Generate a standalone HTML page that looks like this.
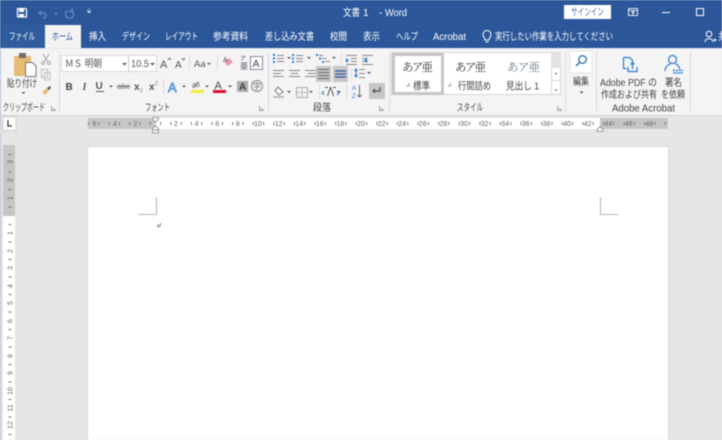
<!DOCTYPE html>
<html lang="ja"><head><meta charset="utf-8"><title>文書 1 - Word</title>
<style>
html,body{margin:0;padding:0;width:722px;height:440px;overflow:hidden;background:#e6e6e6}
svg{display:block;filter:blur(.4px)}
text{font-family:"Liberation Sans","Noto Sans CJK JP",sans-serif;font-size:10px;fill:#444}
.w text,text.w{fill:#fff}
.r text{font-size:7px;fill:#666;text-anchor:middle}
.i{fill:none;stroke:#666;stroke-width:1}
.b{fill:none;stroke:#2b7cd3;stroke-width:1.2}
.a{fill:#555}
.sep{stroke:#dcdcdc;stroke-width:1}
</style></head><body>
<svg width="722" height="440" viewBox="0 0 722 440" xmlns="http://www.w3.org/2000/svg">
<rect width="722" height="440" fill="#e6e6e6"/>
<!-- title bar -->
<rect width="722" height="48" fill="#2b579a"/>
<rect x="0" y="24" width="45" height="24" fill="#2f5c9e"/>
<rect x="45" y="25" width="36" height="24" fill="#f3f3f3"/>
<rect x="0" y="48" width="722" height="1" fill="#dfe6f1"/>
<!-- QAT -->
<path d="M17.5 8.5h8l1 1v7.5h-9z" fill="none" stroke="#fff" stroke-width="1.2"/>
<rect x="19" y="9" width="5" height="3" fill="#fff"/><rect x="19" y="14" width="5" height="3" fill="#fff"/>
<path d="M41 11l-2 2 2 2M39.5 13h5a3 3 0 0 1 0 5h-2" fill="none" stroke="#6d8dbd" stroke-width="1.2"/>
<path d="M54 13l2 2 2-2z" fill="#6d8dbd"/>
<path d="M71 10.500a4 4 0 1 1-3 0M72 8.500v3h-3" fill="none" stroke="#6d8dbd" stroke-width="1.2"/>
<path d="M87.500 9h3M87 11l2 2 2-2z" fill="#cdd8e8" stroke="#cdd8e8" stroke-width=".6"/>
<g class="w">
<text x="343" y="16" textLength="17" lengthAdjust="spacingAndGlyphs">文書</text>
<text x="363" y="16">1</text><text x="379" y="16">-</text>
<text x="385" y="16" textLength="22" lengthAdjust="spacingAndGlyphs">Word</text>
<text x="9" y="40" textLength="26" lengthAdjust="spacingAndGlyphs">ファイル</text>
<text x="89" y="40" textLength="17" lengthAdjust="spacingAndGlyphs">挿入</text>
<text x="122" y="40" textLength="28" lengthAdjust="spacingAndGlyphs">デザイン</text>
<text x="165" y="40" textLength="33" lengthAdjust="spacingAndGlyphs">レイアウト</text>
<text x="213" y="40" textLength="35" lengthAdjust="spacingAndGlyphs">参考資料</text>
<text x="265" y="40" textLength="49" lengthAdjust="spacingAndGlyphs">差し込み文書</text>
<text x="330" y="40" textLength="17" lengthAdjust="spacingAndGlyphs">校閲</text>
<text x="363" y="40" textLength="17" lengthAdjust="spacingAndGlyphs">表示</text>
<text x="396" y="40" textLength="22" lengthAdjust="spacingAndGlyphs">ヘルプ</text>
<text x="433" y="40" textLength="33" lengthAdjust="spacingAndGlyphs">Acrobat</text>
<text x="495" y="40" textLength="118" lengthAdjust="spacingAndGlyphs">実行したい作業を入力してください</text>
<text x="718" y="40">共</text>
</g>
<text x="52" y="40" style="fill:#2b579a" textLength="21" lengthAdjust="spacingAndGlyphs">ホーム</text>
<path d="M485 40c0-2-2-3-2-5.500a4 4 0 0 1 8 0c0 2.500-2 3.500-2 5.500zM485.500 42h3" fill="none" stroke="#fff"/>
<circle cx="709" cy="34" r="2.800" fill="none" stroke="#fff"/><path d="M705 42c0-4.500 8-4.500 8 0M713.500 40h3M715 38.500v3" fill="none" stroke="#fff"/>
<!-- sign in + window -->
<rect x="564" y="5" width="47" height="14" fill="#fff"/>
<text x="571" y="15.500" style="fill:#4a6ea8" textLength="33" lengthAdjust="spacingAndGlyphs">サインイン</text>
<rect x="628.500" y="8.500" width="9" height="7" fill="none" stroke="#dfe6f1"/><path d="M628 10.500h10M633 15v-3M631.500 13l1.500-1.500 1.500 1.500" fill="none" stroke="#dfe6f1"/>
<rect x="662" y="12" width="8" height="1" fill="#fff"/>
<rect x="696.500" y="8.500" width="7" height="7" fill="none" stroke="#fff"/>
<!-- ribbon -->
<rect x="0" y="49" width="722" height="66" fill="#f4f4f4"/>
<rect x="0" y="115" width="722" height="1" fill="#d2d2d2"/>
<g class="sep"><path d="M59.500 52v60M268.500 52v60M389.500 52v60M565.500 52v60M596.500 52v60M690.500 52v60"/></g>
<!-- clipboard -->
<rect x="14" y="56" width="17" height="20" rx="1" fill="#e6bc74"/>
<rect x="19" y="53" width="7" height="5" fill="#6b6b6b"/>
<path d="M25.500 62.500h7l3.500 3.500v10.500h-10.500z" fill="#fff" stroke="#777"/>
<text x="7" y="87" textLength="30" lengthAdjust="spacingAndGlyphs">貼り付け</text>
<path d="M21.500 92l2 2 2-2z" class="a"/>
<path d="M43 54l5 8M49 54l-5 8" stroke="#a9a9a9" fill="none"/><circle cx="43" cy="63" r="1.500" fill="none" stroke="#a9a9a9"/><circle cx="49" cy="63" r="1.500" fill="none" stroke="#a9a9a9"/>
<path d="M41.500 69.500h6v8h-6zM44.500 72.500h5.500v7.500h-5.500z" fill="#f4f4f4" stroke="#bdbdbd"/>
<path d="M42 92l5-4 2 3-4 4z" fill="#e6bc74"/><path d="M47 88l3-2 1 2-2 2z" fill="#555"/>
<text x="3" y="111" textLength="42" lengthAdjust="spacingAndGlyphs">クリップボード</text>
<path d="M51.500 106v4.500h4.500M53 108l2.500 2.500" fill="none" stroke="#888" stroke-width=".8"/>
<!-- font -->
<rect x="61.500" y="55.500" width="95" height="16" fill="#fff" stroke="#d8d8d8"/><path d="M128.500 55v17" stroke="#c8c8c8"/>
<text x="65" y="67" style="font-size:10px;fill:#555" textLength="37" lengthAdjust="spacingAndGlyphs">ＭＳ 明朝</text>
<path d="M122 63l2.500 2.500 2.500-2.500z" class="a"/>
<text x="131" y="67" style="font-size:10px;fill:#555" textLength="18" lengthAdjust="spacingAndGlyphs">10.5</text>
<path d="M150 63l2.500 2.500 2.500-2.500z" class="a"/>
<text x="160" y="68" style="font-size:11px;fill:#555">A</text><path d="M168 60l1.500-2 1.500 2" fill="none" stroke="#555" stroke-width=".8"/>
<text x="175" y="68" style="font-size:10px;fill:#555">A</text><path d="M182 58l1.500 2 1.500-2" fill="none" stroke="#555" stroke-width=".8"/>
<path d="M189.500 55v15M217.500 55v15M163.500 79v15" class="sep"/>
<text x="194" y="67" style="font-size:9.500px;fill:#555">Aa</text><path d="M207 63l2 2 2-2z" class="a"/>
<path d="M224 62l5-4 4 4-5 4z" fill="#e89bb0"/><text x="223" y="62" style="font-size:7px;fill:#555">A</text>
<text x="240" y="60.500" style="font-size:6px;fill:#555">ア</text><text x="240" y="69" style="font-size:8px;fill:#555">亜</text>
<rect x="250.500" y="56.500" width="12" height="13" fill="#fff" stroke="#7b8aa0"/><text x="252.500" y="67" style="font-size:10.500px;fill:#444">A</text>
<text x="65.500" y="90" style="font-size:10px;font-weight:bold;fill:#444">B</text>
<text x="82.500" y="90" style="font-size:10px;font-style:italic;font-weight:bold;font-family:'Liberation Serif',serif;fill:#555">I</text>
<text x="95.500" y="89" style="font-size:10px;font-weight:bold;fill:#555">U</text><rect x="96" y="91" width="8" height="1" fill="#555"/>
<path d="M109 85.500l2 2 2-2z" class="a"/>
<text x="117" y="89" style="font-size:8px;fill:#777" textLength="13" lengthAdjust="spacingAndGlyphs">abc</text><rect x="117" y="86" width="13" height="1" fill="#666"/>
<text x="134" y="90" style="font-size:10px;font-weight:bold;fill:#555">x</text><text x="140" y="92" style="font-size:5px;fill:#777">2</text>
<text x="149" y="90" style="font-size:10px;font-weight:bold;fill:#555">x</text><text x="155" y="85" style="font-size:5px;fill:#777">2</text>
<text x="168" y="92" style="font-size:13px;fill:#dfe9f6;stroke:#2b7cd3;stroke-width:.7">A</text>
<path d="M182 85.500l2 2 2-2zM205 85.500l2 2 2-2zM228 85.500l2 2 2-2z" class="a"/>
<text x="192" y="87" style="font-size:7px;fill:#666">ab</text><path d="M193 88l6-6" stroke="#777"/><rect x="191" y="90" width="13" height="3" fill="#f2ee3a"/>
<text x="214.500" y="89" style="font-size:11px;fill:#444">A</text><rect x="213" y="90" width="13" height="3" fill="#d8102a"/>
<rect x="237" y="81" width="11" height="11" fill="#adadad"/><text x="239" y="90" style="font-size:10px;font-weight:bold;fill:#444">A</text>
<circle cx="257" cy="86" r="5.500" fill="none" stroke="#888"/><text x="253" y="89" style="font-size:8px;fill:#666">字</text>
<text x="145" y="111" textLength="25" lengthAdjust="spacingAndGlyphs">フォント</text>
<path d="M259.500 106v4.500h4.500M261 108l2.500 2.500" fill="none" stroke="#888" stroke-width=".8"/>
<!-- paragraph -->
<rect x="316" y="66" width="15" height="16" fill="#c6c6c6"/>
<rect x="333" y="66" width="15" height="16" fill="#c6c6c6"/>
<rect x="369" y="83" width="16" height="16" fill="#c6c6c6"/>
<g fill="none" stroke="#888">
<path d="M277 55.500h7M277 58.500h7M277 61.500h7M296 55.500h7M296 58.500h7M296 61.500h7M319 55.500h4M322 58.500h5M325 61.500h5"/>
<path d="M346 55.500h11M351 58.500h6M351 61.500h6M346 64.500h11M362 55.500h11M362 58.500h6M362 61.500h6M362 64.500h11"/>
<path d="M273 70.500h11M273 73.500h8M273 76.500h11M289 70.500h11M291 73.500h7M289 76.500h11M305 70.500h11M308 73.500h8M305 76.500h11"/>
<path d="M318 69.500h11M318 72.500h11M318 75.500h11M318 78.500h11" stroke="#666"/>
<path d="M335 74h11M335 77h11M335 71h11" stroke="#2b579a" stroke-width="1.200"/>
<path d="M359 69.500h6M359 73.500h6M359 77.500h6" />
<rect x="296.500" y="87.500" width="11" height="10" stroke="#aaa"/><path d="M302 87v11M296 92.500h12" stroke="#bbb"/>
</g>
<g fill="#2b7cd3"><path d="M273 54h2v2h-2zM273 57.500h2v2h-2zM273 61h2v2h-2zM292 54h2v2h-2zM292 57.500h2v2h-2zM292 61h2v2h-2zM316 54h2v2h-2zM319 57.500h2v2h-2zM322 61h2v2h-2z"/>
<path d="M349 58l3 2.500-3 2.500zM367 60.500l3-2.500v5z" transform="translate(-3 0)"/>
<path d="M356 68l2 3h-4zM356 78l2-3h-4z"/><rect x="355.500" y="70" width="1" height="6"/></g>
<path d="M287 57l2 2 2-2zM307 57l2 2 2-2zM332 57l2 2 2-2zM367 72l2 2 2-2zM287 91l2 2 2-2zM309 91l2 2 2-2zM337 91l2 2 2-2z" class="a"/>
<path d="M319.500 84v15M341.500 53v13M351.500 68v14M346.500 84v15" class="sep"/>
<path d="M278 87l5 5-4 3-4-4z" fill="#fff" stroke="#777"/><rect x="273" y="96" width="11" height="2" fill="#bbb"/>
<path d="M325 87.500h3M333 87.500h3M330.500 87l-3 9M330.500 87l3 9" stroke="#555" fill="none"/>
<path d="M324 91l-2 2 2 2M337 91l2 2-2 2" fill="none" stroke="#2b7cd3"/>
<text x="352" y="90" style="font-size:6.500px;fill:#2b7cd3">A</text><text x="352" y="98" style="font-size:6.500px;fill:#2b7cd3">Z</text>
<path d="M359.500 85v12M357.500 95l2 2 2-2" fill="none" stroke="#666"/>
<path d="M380 87v4h-7M375 89l-2 2 2 2" fill="none" stroke="#555" stroke-width="1.200"/>
<text x="313" y="111" textLength="18" lengthAdjust="spacingAndGlyphs">段落</text>
<path d="M379.500 106v4.500h4.500M381 108l2.500 2.500" fill="none" stroke="#888" stroke-width=".8"/>
<!-- styles -->
<rect x="391.500" y="52.500" width="169" height="42" fill="#fff" stroke="#d6d6d6"/>
<rect x="393.500" y="54.500" width="49" height="39" fill="#fff" stroke="#c6c6c6" stroke-width="3"/>
<rect x="551" y="53" width="10" height="15" fill="#e3e3e3"/>
<path d="M551.500 68v26M551 80.500h10" stroke="#d6d6d6" fill="none"/>
<path d="M554.500 73l1.500 1.500 1.500-1.500zM554 88h4M554.500 89.500l1.500 1.500 1.500-1.500z" fill="#555"/>
<text x="402" y="71" style="font-size:11.500px;fill:#333;font-family:'Liberation Serif','Noto Serif CJK SC',serif" textLength="31">あア亜</text>
<text x="455" y="71" style="font-size:11.500px;fill:#333;font-family:'Liberation Serif','Noto Serif CJK SC',serif" textLength="31">あア亜</text>
<text x="507" y="71" style="font-size:11.500px;fill:#6d7a8c;font-family:'Liberation Serif','Noto Serif CJK SC',serif" textLength="33">あア亜</text>
<path d="M409 83v3h-3M450.500 83v3h-3" fill="none" stroke="#888" stroke-width=".8"/>
<text x="413" y="89.500" textLength="17" lengthAdjust="spacingAndGlyphs">標準</text>
<text x="458" y="89.500" textLength="33" lengthAdjust="spacingAndGlyphs">行間詰め</text>
<text x="506" y="89.500" textLength="33" lengthAdjust="spacingAndGlyphs">見出し 1</text>
<text x="457" y="111" textLength="26" lengthAdjust="spacingAndGlyphs">スタイル</text>
<path d="M557.500 106v4.500h4.500M559 108l2.500 2.500" fill="none" stroke="#888" stroke-width=".8"/>
<!-- edit -->
<rect x="570" y="51" width="22" height="22" fill="#fff" stroke="#e3e3e3"/>
<circle cx="582.500" cy="59.500" r="3.800" fill="none" stroke="#2b6cb0" stroke-width="1.300"/><path d="M579.500 62.500l-3.500 3.500" stroke="#2b6cb0" stroke-width="1.500"/>
<text x="573" y="85" textLength="16" lengthAdjust="spacingAndGlyphs">編集</text>
<path d="M579.500 91.500l2 2 2-2z" class="a"/>
<!-- acrobat -->
<path d="M623.500 57.500h6l3 3v5M623.500 57.500v11h3" class="b"/>
<path d="M628 67v4.500h9V67M632.500 69v-6M630.500 64.500l2-2 2 2" class="b"/>
<circle cx="672.500" cy="59.500" r="4" class="b"/><path d="M665 71c0-5 4-6.500 5.500-7.500M680 69c-1-3-3-4.500-4.500-5.500" class="b"/><path d="M673 70.500h10" stroke="#2b7cd3" stroke-width="1.500" stroke-dasharray="2 1"/>
<path d="M673 73h10" stroke="#2b7cd3"/>
<text x="600" y="86" textLength="57" lengthAdjust="spacingAndGlyphs">Adobe PDF の</text>
<text x="601" y="98" textLength="56" lengthAdjust="spacingAndGlyphs">作成および共有</text>
<text x="665" y="86" textLength="17" lengthAdjust="spacingAndGlyphs">署名</text>
<text x="661" y="98" textLength="24" lengthAdjust="spacingAndGlyphs">を依頼</text>
<text x="612" y="111.500" textLength="63" lengthAdjust="spacingAndGlyphs">Adobe Acrobat</text>
<!-- left window edge -->
<rect x="0" y="49" width="1" height="391" fill="#b4c3dc"/>
<!-- rulers -->
<rect x="3" y="117" width="13" height="13" fill="#fff" stroke="#d0d0d0"/>
<path d="M8 120v6h4" fill="none" stroke="#333" stroke-width="1.200"/>
<rect x="88" y="118" width="580" height="11" fill="#fff"/>
<rect x="88" y="118" width="67" height="11" fill="#c6c6c6"/>
<rect x="600" y="118" width="68" height="11" fill="#c6c6c6"/>
<line x1="88" y1="123.500" x2="668" y2="123.500" stroke="#777" stroke-width="3" stroke-dasharray="1 9.300"/>
<g class="r">
<text x="94.500" y="126">6</text><text x="115" y="126">4</text><text x="135.500" y="126">2</text>
<text x="176" y="126">2</text><text x="196.600" y="126">4</text><text x="217.200" y="126">6</text><text x="237.800" y="126">8</text>
<text x="258" y="126">10</text><text x="278.600" y="126">12</text><text x="299.200" y="126">14</text><text x="319.800" y="126">16</text><text x="340.400" y="126">18</text>
<text x="361" y="126">20</text><text x="381.600" y="126">22</text><text x="402.200" y="126">24</text><text x="422.800" y="126">26</text><text x="443.400" y="126">28</text>
<text x="464" y="126">30</text><text x="484.600" y="126">32</text><text x="505.200" y="126">34</text><text x="525.800" y="126">36</text><text x="546.400" y="126">38</text>
<text x="567" y="126">40</text><text x="587.600" y="126">42</text><text x="608.200" y="126">44</text><text x="628.800" y="126">46</text><text x="649.400" y="126">48</text>
</g>
<path d="M152.500 117.500h6v2l-3 3-3-3zM152.500 128.500l3-3 3 3v1.500h-6zM152.500 130h6v3h-6z" fill="#f4f4f4" stroke="#8a8a8a" stroke-width=".8"/>
<path d="M597 131.500v-2l3-3 3 3v2z" fill="#f4f4f4" stroke="#8a8a8a" stroke-width=".8"/>
<!-- vertical ruler -->
<rect x="0" y="130" width="18" height="3" fill="#e0e0e0"/>
<rect x="3" y="145" width="12" height="295" fill="#fff"/>
<rect x="3" y="145" width="12" height="71" fill="#c6c6c6"/>
<line x1="10" y1="154" x2="10" y2="440" stroke="#777" stroke-width="3" stroke-dasharray="1 16.500"/>
<g class="r">
<text transform="translate(12.500 162) rotate(-90)">3</text><text transform="translate(12.500 180) rotate(-90)">2</text><text transform="translate(12.500 198) rotate(-90)">1</text>
<text transform="translate(12.500 233) rotate(-90)">1</text><text transform="translate(12.500 251) rotate(-90)">2</text><text transform="translate(12.500 268) rotate(-90)">3</text>
<text transform="translate(12.500 286) rotate(-90)">4</text><text transform="translate(12.500 303) rotate(-90)">5</text><text transform="translate(12.500 321) rotate(-90)">6</text>
<text transform="translate(12.500 338) rotate(-90)">7</text><text transform="translate(12.500 356) rotate(-90)">8</text><text transform="translate(12.500 373) rotate(-90)">9</text>
<text transform="translate(12.500 391) rotate(-90)">10</text><text transform="translate(12.500 408) rotate(-90)">11</text><text transform="translate(12.500 425) rotate(-90)">12</text>
</g>
<!-- page -->
<rect x="87" y="146" width="582" height="294" fill="#d9d9d9"/>
<rect x="88" y="147" width="580" height="293" fill="#fff"/>
<path d="M156.500 197v17.500H138M600.500 197v17.500H618" fill="none" stroke="#b5b5b5"/>
<path d="M160.500 223v3h-3M159 224.500l-1.500 1.500 1.500 1.500" fill="none" stroke="#777" stroke-width=".8"/>
</svg>
</body></html>
